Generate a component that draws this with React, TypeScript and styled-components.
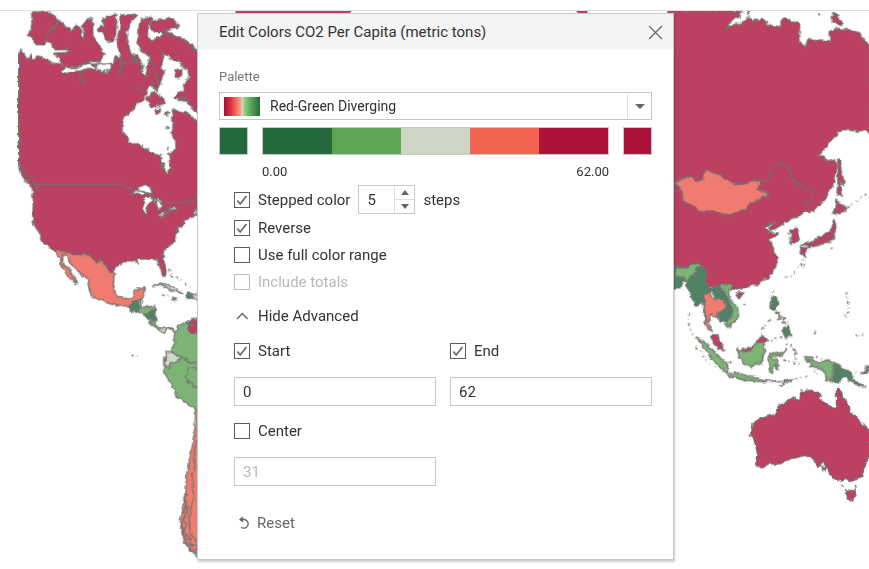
import React, { useState } from "react";
import styled, { createGlobalStyle } from "styled-components";

const GlobalStyle = createGlobalStyle`
  * { box-sizing: border-box; }
  body {
    margin: 0;
    background: #fff;
    color: #333;
    font: 15px/20px Roboto, "Liberation Sans", sans-serif;
  }
  button, input, select { font: inherit; color: inherit; }
`;

const Page = styled.div`
  min-height: 100vh;
  display: flex;
  flex-direction: column;
`;

const TopBar = styled.header`
  height: 11px;
  flex: none;
  border-bottom: 1px solid #dcdcdc;
`;

const Workspace = styled.main`
  position: relative;
  flex: 1;
  overflow: hidden;
  padding: 2px 8px 9px 10px;
`;

const MapDrawing = styled.svg`
  position: absolute;
  inset: 0;
  width: 100%;
  height: 100%;
  stroke: #737371;
  stroke-width: 4;
  stroke-linejoin: round;
  .red { fill: #bb4061; }
  .salmon { fill: #ef7c6f; }
  .green { fill: #7db476; }
  .dark { fill: #4e8463; }
  .pale { fill: #d2d8cb; }
  .water { fill: #fff; }
  .line { fill: none; }
  .isles { fill: none; stroke-width: 5; stroke-dasharray: 7 9 3 12; }
  .rough { fill: none; stroke-width: 6; stroke-dasharray: 9 3 5 2; }
`;

const Dialog = styled.section`
  position: relative;
  width: 100%;
  max-width: 477px;
  margin: 0 auto;
  background: #fff;
  border: 1px solid #c8c8c8;
  box-shadow: 1px 2px 2px rgba(0, 0, 0, 0.2);
`;

const TitleBar = styled.header`
  display: flex;
  align-items: center;
  justify-content: space-between;
  height: 36px;
  padding: 0 10px 0 21px;
  background: #f4f4f4;
`;

const Title = styled.h1`
  margin: 0;
  font-size: 15px;
  font-weight: 400;
`;

const CloseButton = styled.button`
  display: grid;
  padding: 0;
  border: 0;
  background: none;
`;

const Content = styled.form`
  padding: 17px 21px 23px;
`;

const PaletteLabel = styled.label`
  display: block;
  margin-bottom: 5px;
  font-size: 13px;
  color: #777;
`;

const SelectBox = styled.div`
  display: grid;
  grid-template-columns: 46px 1fr 24px;
  align-items: center;
  height: 28px;
  border: 1px solid #c6c6c6;
  > * { grid-row: 1; }
`;

const Swatch = styled.span`
  grid-column: 1;
  width: 36px;
  height: 19px;
  margin-left: 4px;
  background: linear-gradient(90deg, #a90c38 0%, #d92f43 18%, #f5655a 32%, #f9a48f 47%, #cfd8c4 51%, #8fd081 57%, #5da655 74%, #24693d 100%);
`;

const Select = styled.select`
  grid-column: 1 / -1;
  width: 100%;
  height: 26px;
  padding: 0 28px 0 50px;
  border: 0;
  background: transparent;
  appearance: none;
  font-size: 14px;
`;

const SelectArrow = styled.span`
  grid-column: 3;
  display: grid;
  place-items: center;
  height: 24px;
  border-left: 1px solid #dedede;
  pointer-events: none;
`;

const Colors = styled.div`
  display: grid;
  grid-template-columns: 29px 1fr 29px;
  gap: 0 14px;
  margin-top: 7px;
`;

const Ramp = styled.div`
  display: flex;
  height: 28px;
  border: 1px solid #c8c8c8;
`;

const Step = styled.span<{ $color: string }>`
  flex: 1;
  background: ${(p) => p.$color};
`;

const Limits = styled.div`
  grid-column: 2;
  display: flex;
  justify-content: space-between;
  padding-top: 7px;
  font-size: 13px;
`;

const Options = styled.div`
  margin: 3px 0 0 15px;
`;

const Row = styled.div<{ $height: number }>`
  display: flex;
  align-items: center;
  gap: 8px;
  height: ${(p) => p.$height}px;
`;

const CheckLabel = styled.label<{ $disabled?: boolean }>`
  display: flex;
  align-items: center;
  gap: 8px;
  color: ${(p) => (p.$disabled ? "#b8b8b8" : "inherit")};
`;

const CheckBox = styled.span`
  display: grid;
  width: 16px;
  height: 16px;
  > * { grid-area: 1 / 1; }
  > svg { pointer-events: none; }
`;

const CheckInput = styled.input`
  appearance: none;
  width: 16px;
  height: 16px;
  margin: 0;
  border: 1px solid #5d5d5d;
  background: #fff;
  &:disabled { border-color: #bebebe; }
`;

const Spinner = styled.span`
  display: flex;
  width: 57px;
  height: 29px;
  border: 1px solid #c8c8c8;
`;

const SpinInput = styled.input`
  flex: 1;
  min-width: 0;
  padding: 0 0 0 8px;
  border: 0;
  background: none;
`;

const SpinButtons = styled.span`
  display: flex;
  flex-direction: column;
  width: 20px;
  border-left: 1px solid #dedede;
`;

const SpinButton = styled.button`
  flex: 1;
  display: grid;
  place-items: center;
  padding: 0;
  border: 0;
  background: none;
  & + & { border-top: 1px solid #dedede; }
`;

const Disclosure = styled.button`
  display: flex;
  align-items: center;
  gap: 8px;
  height: 41px;
  padding: 0;
  border: 0;
  background: none;
  svg { flex: none; }
`;

const Fields = styled.div`
  display: grid;
  grid-template-columns: 1fr 1fr;
  gap: 10px 14px;
`;

const Field = styled.div``;

const TextInput = styled.input`
  display: block;
  width: 100%;
  height: 29px;
  margin-top: 11px;
  padding: 0 8px;
  border: 1px solid #c6c6c6;
  background: #fff;
  &:disabled { color: #b8b8b8; }
`;

const ResetButton = styled(Disclosure)`
  height: 26px;
  margin-top: 24px;
  padding-left: 4px;
  gap: 6px;
  color: #666;
`;

function Check({ text, on = false, disabled = false }: { text: string; on?: boolean; disabled?: boolean }) {
  const [checked, setChecked] = useState(on);
  return (
    <CheckLabel $disabled={disabled}>
      <CheckBox>
        <CheckInput type="checkbox" checked={checked} disabled={disabled} onChange={(e) => setChecked(e.target.checked)} />
        {checked && (
          <svg width="16" height="16" viewBox="0 0 16 16" fill="none" stroke="#666" strokeWidth="1.7" aria-hidden="true">
            <path d="M3.3 8.5L6.2 12L12.4 4" />
          </svg>
        )}
      </CheckBox>
      {text}
    </CheckLabel>
  );
}

function Triangle({ up = false, width = 8 }: { up?: boolean; width?: number }) {
  return (
    <svg width={width} height="5" viewBox="0 0 10 5" preserveAspectRatio="none" fill="#666" aria-hidden="true">
      <path d={up ? "M0 5L5 0L10 5Z" : "M0 0L5 5L10 0Z"} />
    </svg>
  );
}

function Americas() {
  return (
    <g>
      <path className="red" d="M57 165L63 148L75 165L83 180L90 164L96 180L106 178L110 168L132 172L160 190L186 193L196 203L235 202L258 184L275 193L300 192L340 194L345 168L370 175L392 165L412 165L424 194L430 225L437 230L444 195L452 165L500 168L600 200V620L591 625L582 650L553 660L550 678L530 678L537 690L525 705L528 725L510 735L490 755L488 780L498 810L497 827L490 829L480 802L471 780L440 774L410 776L413 790L403 783L375 783L345 802L342 818L330 818L318 798L302 780L292 788L275 775L258 760L245 765L215 762L188 753L163 752L148 738L133 732L120 702L110 688L98 665L100 600L97 565L83 548L66 527L57 487Z" />
      <path className="red" d="M95 35L150 37L163 47L180 65L150 88L134 135L105 133L96 112L85 106L95 75Z" />
      <path className="red" d="M183 65L197 80L216 92L228 76L240 80L244 110L255 121L247 82L262 55L277 57L279 108L290 125L305 149L314 162L302 184L260 185L235 200L202 203L183 187L175 174L162 160L210 157L201 148L166 150L150 125L140 125L148 93Z" />
      <path className="red" d="M310 55L326 48L347 43L350 65L347 100L338 126L318 120L309 100L294 90L300 76L315 83L308 65Z" />
      <path className="red" d="M360 45L410 43L390 73L379 94L384 132L395 165L412 180L365 195L358 145L350 122L360 80Z" />
      <path className="red" d="M425 58L440 51L458 53L443 80L442 98L450 120L482 112L490 90L514 98L522 110L550 117L566 124L600 164V350L573 320L550 295L530 300L500 290L475 250L450 168L420 150L411 128L414 92Z" />
      <path className="red" d="M452 68L470 58L515 56L528 66L536 82L510 84L493 95L470 95L451 88Z" />
      <path className="water" d="M183 215L195 202L232 202L262 188L285 200L292 190L335 194L332 212L318 218L283 208L263 205L248 214L235 210L205 221Z" />
      <path className="water" d="M486 163L510 168L530 180L553 201L564 212L568 235L550 255L555 270L535 277L522 294L545 301L563 305L582 333L600 340V362L582 358L566 340L540 337L517 325L519 377L514 407L527 421L528 450L507 464L511 508L501 521L483 497L482 465L449 455L415 431L388 432L382 406L367 400L366 375L373 352L390 333L403 329L406 312L430 302L440 284L442 260L456 255L470 274L484 239L493 216L481 196L490 183Z" />
      <path className="red" d="M442 295L462 275L485 290L492 310L470 318L452 320L440 300ZM525 210L545 207L546 225L532 234L524 225ZM465 330L480 322L481 335L468 342ZM499 335L506 336L503 348L497 343ZM499 378L504 381L501 390ZM481 490L491 489L489 500Z" />
      <path className="rough" d="M235 210L244 222L240 236L252 248M281 204L300 212L330 209M291 186L307 178M350 178L372 183L360 208L358 229M455 248L462 262L473 270M409 264L430 277M495 97L508 108L525 105M545 121L560 128L570 142L585 150M507 175L530 182L552 204M395 172L415 185L435 205M550 293L570 308M502 438L508 448L501 448M58 490L62 506L74 512L78 528L92 532L99 545L112 554L114 574M527 691L540 693" />
      <path className="water" d="M392 583L405 570L425 559L434 556L449 561L459 580L443 576L430 584L415 580ZM430 600L443 592L463 593L454 606L443 612L437 644L431 644L430 622ZM463 595L483 600L487 621L477 628L470 616ZM471 645L496 634L508 636L484 650ZM503 625L535 622L525 631L506 629ZM591 620L582 638L591 648Z" />
      <path className="line" d="M433 572L452 582M490 640L504 637" />
      <path className="salmon" d="M163 752L188 753L215 762L245 765L260 760L278 777L292 788L302 780L318 798L330 818L343 822L340 852L348 885L370 896L397 892L408 868L436 864L430 890L420 900L410 902L398 918L388 927L370 915L349 918L313 905L279 892L268 870L263 840L242 820L222 802L208 784L202 767L188 760L184 775L194 797L207 804L216 824L232 848L227 850L211 834L183 800L182 779Z" />
      <path className="dark" d="M397 906L411 899L421 901L419 921L411 936L389 930L387 916L396 914Z" />
      <path className="green" d="M416 901L426 896L425 915L417 920ZM413 937L421 922L465 919L470 925L437 944L409 938Z" />
      <path className="dark" d="M433 943L469 925L467 964L457 963L436 949Z" />
      <path className="green" d="M446 964L460 965L475 977L476 987L452 972Z" />
      <path className="pale" d="M475 982L495 986L511 980L525 994L505 982L492 997L475 990ZM455 861L482 849L512 856L552 880L516 872L486 854ZM575 882L592 884V896L580 895Z" />
      <path className="dark" d="M565 880H575L576 897L558 894Z" />
      <path className="salmon" d="M514 895L530 898L521 901Z" />
      <path className="isles" d="M505 810L545 845L577 865M512 828L527 835M394 1065L416 1073M135 730L151 750M487 885L508 886" />
      <path className="green" d="M600 955H575L575 962L550 970L535 977L530 985L522 998L524 1030L507 1060L495 1070L490 1110L505 1138L524 1168L532 1192L553 1206L591 1233H600Z" />
      <path className="red" d="M600 960H580L564 968L564 990L576 1000H600Z" />
      <path className="water" d="M570 972L579 972L576 980Z" />
      <path className="pale" d="M498 1055L512 1054L540 1072L531 1085L514 1088L509 1106L498 1101L490 1089L499 1080Z" />
      <path className="line" d="M510 1054L540 1069L565 1085L592 1088M591 1104L565 1105L556 1130L562 1147L578 1152L592 1165" />
      <path className="salmon" d="M600 1225L587 1235L585 1280L575 1350L558 1430L555 1480L548 1520L541 1550L543 1594L560 1638L600 1676Z" />
      <path className="line" d="M592 1320L584 1350L584 1400L576 1430L580 1500L567 1550L571 1605L592 1620" />
      <path className="rough" d="M562 1480L554 1500L560 1520L550 1535L556 1552L543 1573L552 1590L545 1600L560 1618L552 1628L575 1636L567 1648L591 1652L583 1662M556 1500L564 1525L552 1560L560 1575L550 1600L566 1608L572 1630L590 1642" />
    </g>
  );
}

function AsiaPacific() {
  return (
    <g transform="translate(2010 0)">
      <path className="red" d="M-4 30L215 33L207 51L185 61L168 87L190 74L213 69L237 50L247 68L262 58L287 61L293 76L332 80L334 60L345 54L364 66L380 67L389 79L386 116L396 137L405 142L416 112L430 126L449 120L480 123L477 97L498 85L542 90L570 99L576 115L590 124L602 140V400L585 388L560 394L540 390L505 395L493 410L470 438L443 467L464 468L472 483L490 478L499 495L489 555L466 594L433 632L405 635L387 648L368 653L325 680L302 694L296 684L314 665L305 668L282 684L303 700L326 698L315 708L298 716L311 744L310 755L322 773L317 803L296 832L255 855L218 864L185 870L150 864L-4 830Z" />
      <path className="red" d="M488 38L497 45L515 62L516 73L490 68L487 53ZM231 35H241L236 43Z" />
      <path className="salmon" d="M12 552L45 530L68 532L72 542L99 538L105 512L119 514L150 525L169 540L193 550L228 552L254 538L272 544L261 567L282 575L299 582L265 600L237 607L225 630L165 647L126 631L90 635L68 615L39 604L36 575Z" />
      <path className="line" d="M272 544L297 539L306 500L331 488L353 498L369 545L400 558L404 573L435 564L425 600L404 606L405 635" />
      <path className="red" d="M503 480L512 477L513 510L524 555L510 545L514 584L501 587L503 530ZM500 600L516 615L533 623L510 644L484 639L498 627ZM491 658L500 674L490 717L454 733L421 743L398 731L435 718L463 706L485 685ZM394 741L412 744L402 768L390 760ZM360 690L379 685L388 714L377 728L359 728L367 708ZM198 885L209 875L219 881L207 897Z" />
      <path className="isles" d="M533 623L595 578M357 698L361 740M392 735L465 730M395 790L360 830L335 836M310 872L302 900M405 765L400 800M530 875L540 930L525 950M481 709L482 747M510 588L520 592M220 910L235 917M435 995V1000M57 940L55 970L68 1004M560 1003L580 1005" />
      <path className="dark" d="M-30 800L25 798L54 807L43 830L33 864H-30Z" />
      <path className="green" d="M20 804L51 803L64 792L91 790L94 798L78 808L74 833L56 846L40 832L30 832L12 825Z" />
      <path className="dark" d="M94 798L109 810L107 847L118 862L137 869L119 879L101 884L105 905L101 919L115 958L113 973L106 970L104 941L97 906L75 918L65 888L46 857L61 831L75 831L78 808Z" />
      <path className="green" d="M147 858L165 850L187 859L175 875L180 896L202 921L206 948L176 984L163 973L185 950L187 925L174 904L160 866Z" />
      <path className="dark" d="M131 859L145 857L165 884L181 910L187 936L171 964L151 963L138 943L161 930L171 925L164 903L139 897L131 880Z" />
      <path className="salmon" d="M99 884L120 878L131 897L162 899L172 928L141 936L142 953L121 943L116 967L130 996L119 990L108 974L108 948L102 921L108 906Z" />
      <path className="red" d="M121 1005L138 1004L155 1029L161 1054L145 1046L127 1022ZM211 1052L245 1041L261 1021L275 1003L294 1020L275 1028L254 1030L249 1051L225 1057Z" />
      <path className="green" d="M77 1014L103 1025L119 1040L155 1078L173 1089L173 1117L155 1111L132 1085L109 1052L94 1031ZM200 1046L212 1056L245 1051L258 1029L278 1026L287 1053L276 1071L274 1094L258 1091L247 1100L217 1092L210 1073ZM173 1122L203 1118L241 1131L291 1140L278 1146L215 1138L179 1129ZM305 1062L345 1057L350 1046L339 1065L303 1070L309 1077L322 1074L325 1109L314 1092L307 1120L299 1117L294 1079L300 1059ZM401 1070L427 1071L434 1084L449 1089L471 1079L492 1089L490 1145L469 1138L466 1120L448 1102L421 1100L425 1085L407 1081ZM332 1157L349 1142L369 1139L343 1151Z" />
      <path className="dark" d="M492 1089L526 1108L545 1121L549 1138L572 1152L579 1162L563 1156L534 1139L522 1127L507 1149L490 1144ZM575 1119L589 1111L590 1097L597 1100L590 1119L570 1120ZM305 893L318 890L324 913L314 931L303 925ZM338 992L356 976L362 1006L347 1014Z" />
      <path className="isles" d="M317 937L346 953L343 982M326 935L340 975M274 990L302 957M321 955L335 966L350 974M301 1023L340 1010L344 993M350 1028L348 1055M362 1035L374 1044L377 1084M340 1080L398 1094M80 1040L117 1092M178 1089L195 1092M282 1144L365 1140L412 1128M430 1110L440 1125M438 1070L460 1080M538 1115L569 1122M450 40V44L455 48M583 1160L590 1160" />
      <path className="rough" d="M320 935L330 948L325 958L343 954L337 968L353 966M370 1045L377 1067M339 981L350 986M285 1142L315 1145L350 1140" />
      <g transform="translate(0 1140)">
        <path className="red" d="M246 130L270 116L313 103L325 79L346 66L365 52L377 61L390 60L391 42L414 31L453 38L447 58L463 68L491 87L499 79L500 30L508 22L516 40L519 57L530 60L541 97L562 111L570 128L583 134L602 158V226L584 255L575 290L556 296L540 305L526 298L516 304L486 293L474 269L466 258L460 243L444 263L434 241L407 226L361 237L333 251L294 252L276 264L257 255L264 226L249 168L243 158Z" />
        <path className="red" d="M526 329L545 333L559 328L557 351L543 364L533 354ZM453 269L467 262L466 273Z" />
        <path className="isles" d="M391 31L435 31M451 41L455 62M240 164L247 174M517 316L524 321M555 318L560 326M474 76L483 80M455 262L466 245" />
      </g>
    </g>
  );
}

function WorldMap() {
  return (
    <MapDrawing viewBox="0 33 2607 1674" preserveAspectRatio="xMidYMin slice" aria-hidden="true">
      <defs>
        <filter id="coast" filterUnits="userSpaceOnUse" x="0" y="0" width="2640" height="1740" colorInterpolationFilters="sRGB">
          <feTurbulence type="fractalNoise" baseFrequency="0.06" numOctaves="2" seed="4" />
          <feDisplacementMap in="SourceGraphic" scale="14" xChannelSelector="R" yChannelSelector="G" />
        </filter>
      </defs>
      <g filter="url(#coast)">
        <path className="red" d="M705 15H1055L1050 50H711ZM1725 15H1765L1758 50H1735Z" />
        <Americas />
        <AsiaPacific />
      </g>
      <path className="line" d="M105 553H365L370 560L388 564L400 570L430 575L460 590L485 610L540 608L585 602L594 577" />
    </MapDrawing>
  );
}

export default function App() {
  const [steps, setSteps] = useState(5);
  const [start, setStart] = useState("0");
  const [end, setEnd] = useState("62");
  return (
    <>
      <GlobalStyle />
      <Page>
        <TopBar />
        <Workspace>
          <WorldMap />
          <Dialog role="dialog" aria-labelledby="dialog-title">
            <TitleBar>
              <Title id="dialog-title">Edit Colors CO2 Per Capita (metric tons)</Title>
              <CloseButton type="button" aria-label="Close">
                <svg width="15" height="15" viewBox="0 0 15 15" fill="none" stroke="#666" strokeWidth="1.2">
                  <path d="M1 1L14 14M14 1L1 14" />
                </svg>
              </CloseButton>
            </TitleBar>
            <Content onSubmit={(e) => e.preventDefault()}>
              <PaletteLabel htmlFor="palette">Palette</PaletteLabel>
              <SelectBox>
                <Swatch />
                <Select id="palette">
                  <option>Red-Green Diverging</option>
                </Select>
                <SelectArrow><Triangle width={10} /></SelectArrow>
              </SelectBox>
              <Colors>
                <Ramp><Step $color="#24693d" /></Ramp>
                <Ramp>
                  {["#24693d", "#5da655", "#cdd6c4", "#f26250", "#ad1238"].map((c) => <Step key={c} $color={c} />)}
                </Ramp>
                <Ramp><Step $color="#ad1238" /></Ramp>
                <Limits><span>0.00</span><span>62.00</span></Limits>
              </Colors>
              <Options>
                <Row $height={29}>
                  <Check text="Stepped color" on />
                  <Spinner>
                    <SpinInput aria-label="Number of steps" value={steps} onChange={(e) => setSteps(Number(e.target.value) || 0)} />
                    <SpinButtons>
                      <SpinButton type="button" aria-label="More steps" onClick={() => setSteps(steps + 1)}><Triangle up /></SpinButton>
                      <SpinButton type="button" aria-label="Fewer steps" onClick={() => setSteps(steps - 1)}><Triangle /></SpinButton>
                    </SpinButtons>
                  </Spinner>
                  <span>steps</span>
                </Row>
                <Row $height={27}><Check text="Reverse" on /></Row>
                <Row $height={27}><Check text="Use full color range" /></Row>
                <Row $height={27}><Check text="Include totals" disabled /></Row>
                <Disclosure type="button" aria-expanded="true">
                  <svg width="16" height="16" viewBox="0 0 16 16" fill="none" stroke="#666" strokeWidth="1.4" aria-hidden="true">
                    <path d="M3 11L8.3 5.5L13.6 11" />
                  </svg>
                  Hide Advanced
                </Disclosure>
                <Fields>
                  <Field>
                    <Row $height={30}><Check text="Start" on /></Row>
                    <TextInput aria-label="Start value" value={start} onChange={(e) => setStart(e.target.value)} />
                  </Field>
                  <Field>
                    <Row $height={30}><Check text="End" on /></Row>
                    <TextInput aria-label="End value" value={end} onChange={(e) => setEnd(e.target.value)} />
                  </Field>
                  <Field>
                    <Row $height={30}><Check text="Center" /></Row>
                    <TextInput aria-label="Center value" value="31" disabled readOnly />
                  </Field>
                </Fields>
                <ResetButton type="button">
                  <svg width="13" height="14" viewBox="0 0 13 14" fill="none" stroke="#666" strokeWidth="1.3" aria-hidden="true">
                    <path d="M2 3.5H6.8A4.4 4.4 0 1 1 3 11.2" />
                    <path d="M5 0.5L1 3.5L5 6.5Z" fill="#666" stroke="none" />
                  </svg>
                  Reset
                </ResetButton>
              </Options>
            </Content>
          </Dialog>
        </Workspace>
      </Page>
    </>
  );
}
